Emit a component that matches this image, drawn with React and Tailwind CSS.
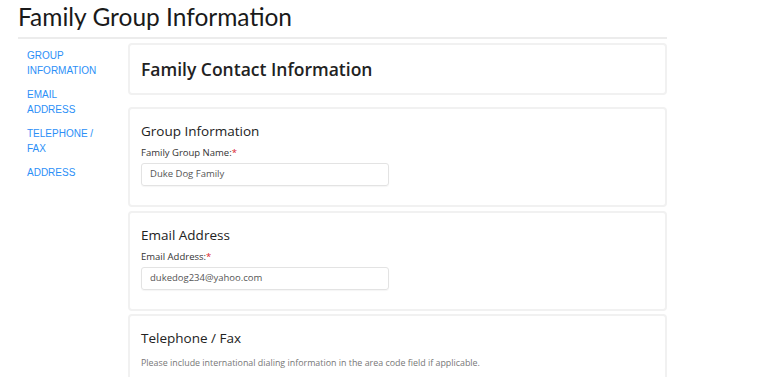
import React from 'react';

const ui = { fontFamily: '"Open Sans", "Noto Sans", sans-serif' };
const arial = { fontFamily: '"Liberation Sans", Arial, sans-serif' };
const lato = { fontFamily: 'Lato, "Open Sans", sans-serif' };

function Card({ children, className = '' }) {
  return (
    <div className={`border-2 border-[#f1f1f1] rounded-[4px] bg-white ${className}`}>
      {children}
    </div>
  );
}

function Field({ label, value }) {
  return (
    <div>
      <div className="text-[9.5px] leading-[14px] text-[#333] mb-[3px]">
        {label}
        <span className="text-[#d9232d]">*</span>
      </div>
      <div className="w-[248px] h-[23px] border border-[#e3e3e3] rounded-[3px] shadow-[0_1px_1px_rgba(0,0,0,0.04)] flex items-center px-[8px] text-[9.5px] text-[#555]">
        {value}
      </div>
    </div>
  );
}

export default function App() {
  const links = [
    ['GROUP', 'INFORMATION'],
    ['EMAIL', 'ADDRESS'],
    ['TELEPHONE /', 'FAX'],
    ['ADDRESS'],
  ];

  return (
    <div className="bg-white min-h-[377px] text-[#222] overflow-hidden" style={ui}>
      <div className="pl-[18px] w-[667px]">
        <h1
          className="text-[24.5px] leading-[32px] pt-[1px] font-normal text-[#1a1a1a] border-b-2 border-[#ececec] pb-[4px]"
          style={lato}
        >
          Family Group Information
        </h1>

        <div className="flex mt-[4px]">
          <nav className="w-[110px] pl-[9px] pt-[5px] flex flex-col gap-[9px]" style={arial}>
            {links.map((l, i) => (
              <a key={i} className="text-[10px] leading-[15px] text-[#2b8ff7] block">
                {l.map((t) => (
                  <div key={t}>{t}</div>
                ))}
              </a>
            ))}
          </nav>

          <div className="flex-1 flex flex-col">
            <Card className="h-[52px] flex items-center px-[11px] mb-[12px]">
              <h2 className="text-[17.5px] font-semibold text-[#222]">Family Contact Information</h2>
            </Card>

            <Card className="px-[11px] pt-[12px] pb-[19px] mb-[4px]">
              <h3 className="text-[13.5px] leading-[20px] text-[#222] mb-[5px]">Group Information</h3>
              <Field label="Family Group Name:" value="Duke Dog Family" />
            </Card>

            <Card className="px-[11px] pt-[12px] pb-[19px] mb-[3px]">
              <h3 className="text-[13.5px] leading-[20px] text-[#222] mb-[5px]">Email Address</h3>
              <Field label="Email Address:" value="dukedog234@yahoo.com" />
            </Card>

            <Card className="px-[11px] pt-[12px] pb-[40px]">
              <h3 className="text-[13.5px] leading-[20px] text-[#222] mb-[8px]">Telephone / Fax</h3>
              <p className="text-[8.9px] leading-[14px] text-[#777]">
                Please include international dialing information in the area code field if applicable.
              </p>
            </Card>
          </div>
        </div>
      </div>
    </div>
  );
}
